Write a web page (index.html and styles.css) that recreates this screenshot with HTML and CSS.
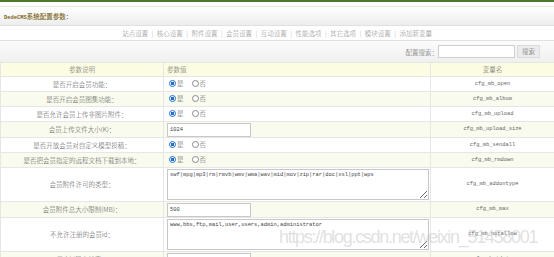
FILE: index.html
```html
<!DOCTYPE html>
<html>
<head>
<meta charset="utf-8" />
<title>DedeCMS系统配置参数</title>
<link rel="stylesheet" href="styles.css">
</head>
<body>
<div class="main">
  <div class="head"><b><span class="en">DedeCMS</span>系统配置参数：</b></div>
  <div class="nav">
    <a href="#">站点设置</a><i>|</i><a href="#">核心设置</a><i>|</i><a href="#">附件设置</a><i>|</i><a href="#">会员设置</a><i>|</i><a href="#">互动设置</a><i>|</i><a href="#">性能选项</a><i>|</i><a href="#">其它选项</a><i>|</i><a href="#">模块设置</a><i>|</i><a href="#">添加新变量</a>
  </div>
  <form class="search">
    <label>配置搜索：</label>
    <input type="text" class="kw" />
    <button type="button">搜索</button>
  </form>
  <table class="cfg">
    <colgroup><col class="c1" /><col class="c2" /><col class="c3" /></colgroup>
    <tr class="th">
      <td class="desc">参数说明</td>
      <td>参数值</td>
      <td class="name">变量名</td>
    </tr>
    <tr>
      <td class="desc">是否开启会员功能：</td>
      <td><label><input type="radio" name="r1" checked />是</label><label><input type="radio" name="r1" />否</label></td>
      <td class="var">cfg_mb_open</td>
    </tr>
    <tr class="alt">
      <td class="desc">是否开启会员图集功能：</td>
      <td><label><input type="radio" name="r2" checked />是</label><label><input type="radio" name="r2" />否</label></td>
      <td class="var">cfg_mb_album</td>
    </tr>
    <tr>
      <td class="desc">是否允许会员上传非图片附件：</td>
      <td><label><input type="radio" name="r3" checked />是</label><label><input type="radio" name="r3" />否</label></td>
      <td class="var">cfg_mb_upload</td>
    </tr>
    <tr class="alt tall">
      <td class="desc">会员上传文件大小(K)：</td>
      <td><input type="text" class="txt" value="1024" /></td>
      <td class="var">cfg_mb_upload_size</td>
    </tr>
    <tr>
      <td class="desc">是否开放会员对自定义模型投稿：</td>
      <td><label><input type="radio" name="r4" checked />是</label><label><input type="radio" name="r4" />否</label></td>
      <td class="var">cfg_mb_sendall</td>
    </tr>
    <tr class="alt">
      <td class="desc">是否把会员指定的远程文档下载到本地：</td>
      <td><label><input type="radio" name="r5" checked />是</label><label><input type="radio" name="r5" />否</label></td>
      <td class="var">cfg_mb_rmdown</td>
    </tr>
    <tr>
      <td class="desc">会员附件许可的类型：</td>
      <td><textarea class="area">swf|mpg|mp3|rm|rmvb|wmv|wma|wav|mid|mov|zip|rar|doc|xsl|ppt|wps</textarea></td>
      <td class="var">cfg_mb_addontype</td>
    </tr>
    <tr class="alt tall">
      <td class="desc">会员附件总大小限制(MB)：</td>
      <td><input type="text" class="txt" value="500" /></td>
      <td class="var">cfg_mb_max</td>
    </tr>
    <tr>
      <td class="desc">不允许注册的会员id：</td>
      <td><textarea class="area">www,bbs,ftp,mail,user,users,admin,administrator</textarea></td>
      <td class="var">cfg_mb_notallow</td>
    </tr>
    <tr class="alt tall">
      <td class="desc">用户id最小长度：</td>
      <td><input type="text" class="txt" value="3" /></td>
      <td class="var">cfg_mb_idmin</td>
    </tr>
  </table>
</div>
<div class="mark">https://blog.csdn.net/weixin_51458001</div>
</body>
</html>
```
FILE: styles.css
```css
* {
  box-sizing: border-box;
}
body {
  margin: 0;
  color: #555;
  font-family: "Noto Sans CJK SC", sans-serif;
  font-size: 6.5px;
  font-weight: 300;
  overflow: hidden;
}
a {
  color: #888;
  text-decoration: none;
}
.main {
  border-top: 2px solid #4e7a2c;
  padding-top: 4px;
}
.head {
  background: linear-gradient(#fff, #ededed);
  border-top: 1px solid #e8e8e8;
  color: #7a6818;
  height: 19px;
  line-height: 19px;
  padding-left: 4px;
}
.head b {
  font-weight: 500;
}
.en {
  font-family: "Liberation Mono", monospace;
  font-size: 5.4px;
  font-weight: 700;
}
.nav {
  border-bottom: 1px solid #e0e0e0;
  border-top: 1px solid #e0e0e0;
  color: #aaa;
  height: 16px;
  line-height: 14px;
  text-align: center;
}
.nav i {
  font-style: normal;
  margin: 0 3.5px;
}
.search {
  align-items: center;
  background: linear-gradient(#fbfbfb, #f0f0f0);
  display: flex;
  height: 21px;
  justify-content: flex-end;
  margin: 0;
  padding-right: 14px;
}
.search label {
  color: #666;
}
.search .kw {
  border: 1px solid #cfcfcf;
  height: 13px;
  margin: 0 2px 0 0;
  width: 77px;
}
.search button {
  background: #ececec;
  border: 1px solid #dcdcdc;
  color: #666;
  font-family: inherit;
  font-size: 6.5px;
  font-weight: 300;
  height: 13px;
  line-height: 11px;
  padding: 0 4px;
}
.cfg {
  border-collapse: collapse;
  table-layout: fixed;
  width: 554px;
}
.cfg .c1 { width: 163px; }
.cfg .c2 { width: 267px; }
.cfg .c3 { width: 124px; }
.cfg td {
  border: 1px solid #e6e6e6;
  height: 15px;
  line-height: 13px;
  padding: 0 0 0 3px;
  vertical-align: middle;
}
.cfg tr.th td {
  background: #fbfce2;
  color: #666;
  height: 14px;
}
.cfg tr.alt td {
  background: #f8fbee;
}
.cfg tr.tall td {
  height: 16px;
}
.cfg td.desc,
.cfg td.name,
.cfg td.var {
  padding: 0;
  text-align: center;
}
.cfg td.var {
  color: #666;
  font-family: "Liberation Mono", monospace;
  font-size: 5.4px;
  font-weight: 400;
}
.cfg label {
  align-items: center;
  display: inline-flex;
  margin-right: 6px;
}
.cfg input[type=radio] {
  -webkit-appearance: none;
  appearance: none;
  background: #fff;
  border: 1px solid #8a8a8a;
  border-radius: 50%;
  height: 7px;
  margin: 0 1px 0 2px;
  width: 7px;
}
.cfg input[type=radio]:checked {
  background: radial-gradient(circle, #1a6fe0 0, #1a6fe0 45%, #fff 55%);
  border-color: #1a6fe0;
}
.txt {
  border: 1px solid #c8c8c8;
  color: #444;
  display: block;
  font-family: "Liberation Mono", monospace;
  font-size: 5.4px;
  height: 14px;
  padding: 0 2px;
  width: 84px;
}
.area {
  border: 1px solid #c8c8c8;
  color: #444;
  display: block;
  font-family: "Liberation Mono", monospace;
  font-size: 5.4px;
  height: 31px;
  line-height: 8px;
  margin: 1px 0;
  padding: 1px 2px;
  width: 262px;
}
.mark {
  color: rgba(195, 195, 195, .5);
  font-family: "Liberation Sans", Arial, sans-serif;
  font-size: 18px;
  left: 279px;
  letter-spacing: -1.3px;
  position: absolute;
  top: 227px;
  white-space: nowrap;
}
```
